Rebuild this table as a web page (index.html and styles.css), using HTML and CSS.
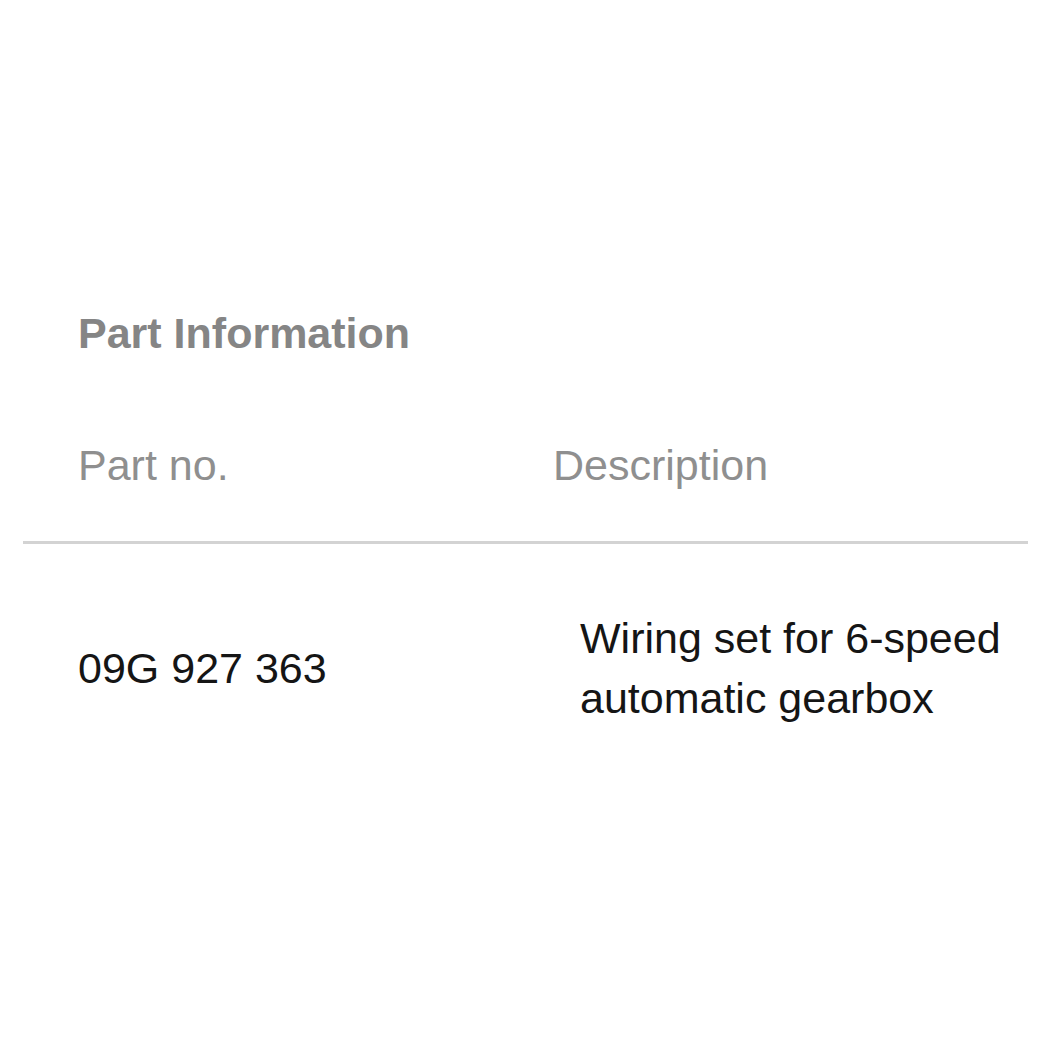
FILE: index.html
```html
<!DOCTYPE html>
<html lang="en">
<head>
<meta charset="utf-8">
<title>Part Information</title>
<link rel="stylesheet" href="styles.css">
</head>
<body>
<section class="panel">
  <h2 class="title">Part Information</h2>
  <div class="table">
    <div class="row head">
      <div class="cell">Part no.</div>
      <div class="cell">Description</div>
    </div>
    <div class="row body">
      <div class="cell partno">09G 927 363</div>
      <div class="cell desc">Wiring set for 6-speed<br>automatic gearbox</div>
    </div>
  </div>
</section>
</body>
</html>
```

FILE: styles.css
```css
html, body {
  margin: 0;
  padding: 0;
  background: #ffffff;
}
body {
  font-family: "Liberation Sans", Arial, sans-serif;
  font-size: 43px;
  width: 1050px;
  height: 1050px;
}
.panel {
  padding-top: 308px;
  margin: 0 22px 0 23px;
}
.title {
  margin: 0 0 82px 0;
  padding-left: 55px;
  font-size: 43px;
  font-weight: bold;
  line-height: 50px;
  color: #858585;
}
.row {
  display: grid;
  grid-template-columns: 475px 1fr;
  padding-left: 55px;
}
.head {
  line-height: 50px;
  color: #8f8f8f;
  padding-bottom: 51px;
  border-bottom: 3px solid #d3d3d3;
}
.body {
  padding-top: 64px;
  line-height: 60px;
  color: #151515;
  align-items: center;
}
.desc {
  padding-left: 27px;
}
```
